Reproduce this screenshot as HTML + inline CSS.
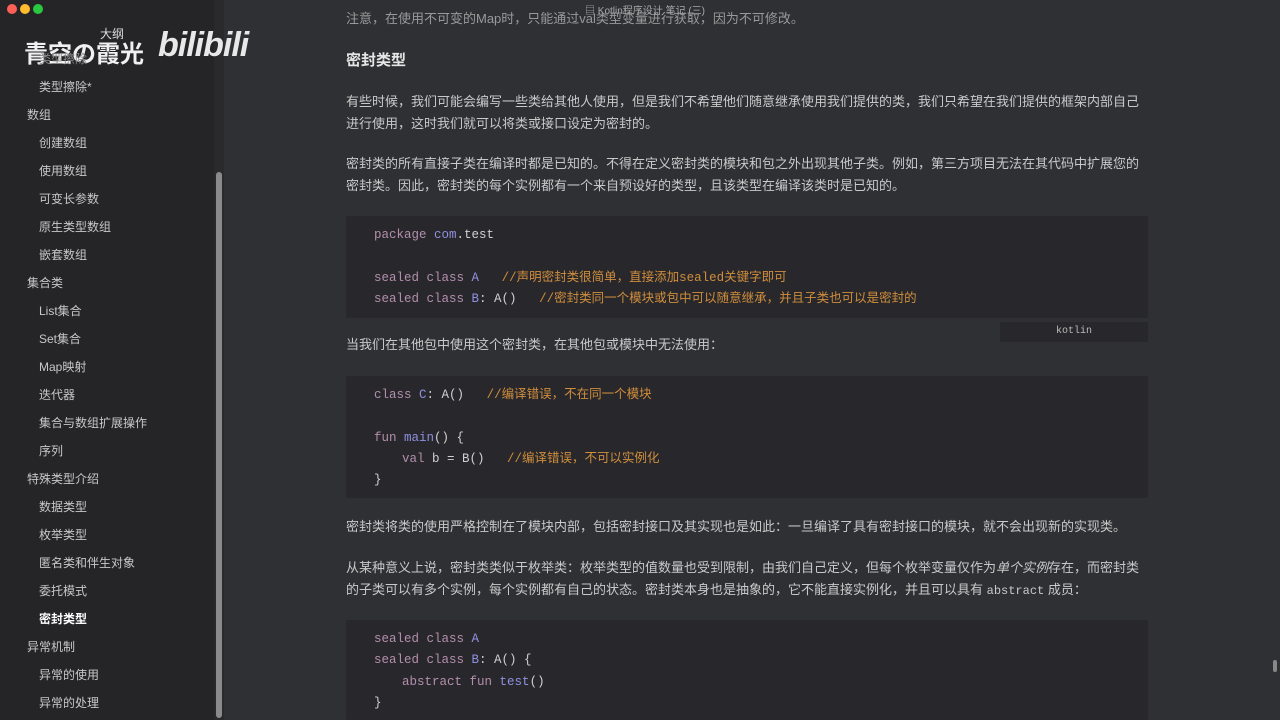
<!DOCTYPE html>
<html><head><meta charset="utf-8"><style>
body{margin:0;width:1280px;height:720px;overflow:hidden;background:#2f3034;font-family:"Liberation Sans","Noto Sans CJK SC",sans-serif;position:relative}
.side{position:absolute;left:0;top:0;width:214px;height:720px;background:#252528}
.sb{position:absolute;left:214px;top:0;width:10px;height:720px;background:#2a2a2d}
.thumb{position:absolute;left:216px;top:172px;width:6px;height:546px;background:#8a8a8d;border-radius:3px}
.it{position:absolute;font-size:12px;color:#c8c8c8;white-space:nowrap}
.l1{left:27px}.l2{left:39px}
.p{position:absolute;left:346px;font-size:13px;color:#c9c9c9;line-height:22px;width:802px}
.code{position:absolute;left:346px;width:802px;background:#28282c;border-radius:2px}
.cl{position:absolute;left:374px;font-family:"Liberation Mono","Noto Sans CJK SC",monospace;font-size:12.5px;line-height:16px;color:#d0d0d0;white-space:pre}
.k{color:#b48ead}.t{color:#8f90e0}.c{color:#d08d3c}
</style></head><body>
<div class="side"></div><div class="sb"></div><div class="thumb"></div>
<div style="position:absolute;left:7px;top:4px;width:10px;height:10px;border-radius:50%;background:#fe5f57"></div>
<div style="position:absolute;left:20px;top:4px;width:10px;height:10px;border-radius:50%;background:#febc2e"></div>
<div style="position:absolute;left:33px;top:4px;width:10px;height:10px;border-radius:50%;background:#28c840"></div>
<div style="position:absolute;left:583px;top:2px;font-size:10px;color:#aaa;background:#2f3034;padding:0 2px">▤ Kotlin程序设计 笔记 (三)</div>
<div style="position:absolute;left:100px;top:25px;font-size:12px;color:#ddd">大纲</div>
<div style="position:absolute;left:24px;top:34px;font-size:24px;font-weight:bold;color:#f0f0f0">青空の霞光</div>
<div style="position:absolute;left:158px;top:26px;font-size:34px;font-weight:bold;color:#e8e8e8;font-style:italic;letter-spacing:-1px">bilibili</div>
<div class="it l2" style="top:50px;color:#888">类型擦除</div>
<div class="it l2" style="top:78px">类型擦除*</div>
<div class="it l1" style="top:106px">数组</div>
<div class="it l2" style="top:134px">创建数组</div>
<div class="it l2" style="top:162px">使用数组</div>
<div class="it l2" style="top:190px">可变长参数</div>
<div class="it l2" style="top:218px">原生类型数组</div>
<div class="it l2" style="top:246px">嵌套数组</div>
<div class="it l1" style="top:274px">集合类</div>
<div class="it l2" style="top:302px">List集合</div>
<div class="it l2" style="top:330px">Set集合</div>
<div class="it l2" style="top:358px">Map映射</div>
<div class="it l2" style="top:386px">迭代器</div>
<div class="it l2" style="top:414px">集合与数组扩展操作</div>
<div class="it l2" style="top:442px">序列</div>
<div class="it l1" style="top:470px">特殊类型介绍</div>
<div class="it l2" style="top:498px">数据类型</div>
<div class="it l2" style="top:526px">枚举类型</div>
<div class="it l2" style="top:554px">匿名类和伴生对象</div>
<div class="it l2" style="top:582px">委托模式</div>
<div class="it l2" style="top:610px;color:#fff;font-weight:bold">密封类型</div>
<div class="it l1" style="top:638px">异常机制</div>
<div class="it l2" style="top:666px">异常的使用</div>
<div class="it l2" style="top:694px">异常的处理</div>

<div class="p" style="top:8px;color:#999">注意，在使用不可变的Map时，只能通过val类型变量进行获取，因为不可修改。</div>
<div class="p" style="top:50px;font-size:15px;font-weight:bold;color:#e6e6e6">密封类型</div>
<div class="p" style="top:91px">有些时候，我们可能会编写一些类给其他人使用，但是我们不希望他们随意继承使用我们提供的类，我们只希望在我们提供的框架内部自己进行使用，这时我们就可以将类或接口设定为密封的。</div>
<div class="p" style="top:153px">密封类的所有直接子类在编译时都是已知的。不得在定义密封类的模块和包之外出现其他子类。例如，第三方项目无法在其代码中扩展您的密封类。因此，密封类的每个实例都有一个来自预设好的类型，且该类型在编译该类时是已知的。</div>
<div class="code" style="top:216px;height:102px"></div>
<div class="cl" style="top:227px"><span class="k">package</span> <span class="t">com</span>.test</div>
<div class="cl" style="top:270px"><span class="k">sealed class</span> <span class="t">A</span>   <span class="c">//声明密封类很简单，直接添加sealed关键字即可</span></div>
<div class="cl" style="top:291px"><span class="k">sealed class</span> <span class="t">B</span>: A()   <span class="c">//密封类同一个模块或包中可以随意继承，并且子类也可以是密封的</span></div>
<div style="position:absolute;left:1000px;top:322px;width:148px;height:20px;background:#28282c;font-family:'Liberation Mono',monospace;font-size:10px;color:#bbb;text-align:center;line-height:20px">kotlin</div>
<div class="p" style="top:334px">当我们在其他包中使用这个密封类，在其他包或模块中无法使用：</div>
<div class="code" style="top:376px;height:122px"></div>
<div class="cl" style="top:387px"><span class="k">class</span> <span class="t">C</span>: A()   <span class="c">//编译错误，不在同一个模块</span></div>
<div class="cl" style="top:430px"><span class="k">fun</span> <span class="t">main</span>() {</div>
<div class="cl" style="top:451px;left:372px">    <span class="k">val</span> b = B()   <span class="c">//编译错误，不可以实例化</span></div>
<div class="cl" style="top:472px">}</div>
<div class="p" style="top:516px">密封类将类的使用严格控制在了模块内部，包括密封接口及其实现也是如此：一旦编译了具有密封接口的模块，就不会出现新的实现类。</div>
<div class="p" style="top:557px">从某种意义上说，密封类类似于枚举类：枚举类型的值数量也受到限制，由我们自己定义，但每个枚举变量仅作为<i>单个实例</i>存在，而密封类的子类可以有多个实例，每个实例都有自己的状态。密封类本身也是抽象的，它不能直接实例化，并且可以具有 <span style="font-family:'Liberation Mono',monospace;font-size:12px">abstract</span> 成员：</div>
<div class="code" style="top:620px;height:100px"></div>
<div class="cl" style="top:631px"><span class="k">sealed class</span> <span class="t">A</span></div>
<div class="cl" style="top:652px"><span class="k">sealed class</span> <span class="t">B</span>: A() {</div>
<div class="cl" style="top:674px;left:372px">    <span class="k">abstract fun</span> <span class="t">test</span>()</div>
<div class="cl" style="top:695px">}</div>
<div style="position:absolute;left:1273px;top:660px;width:4px;height:12px;background:#888;border-radius:2px"></div>
</body></html>
